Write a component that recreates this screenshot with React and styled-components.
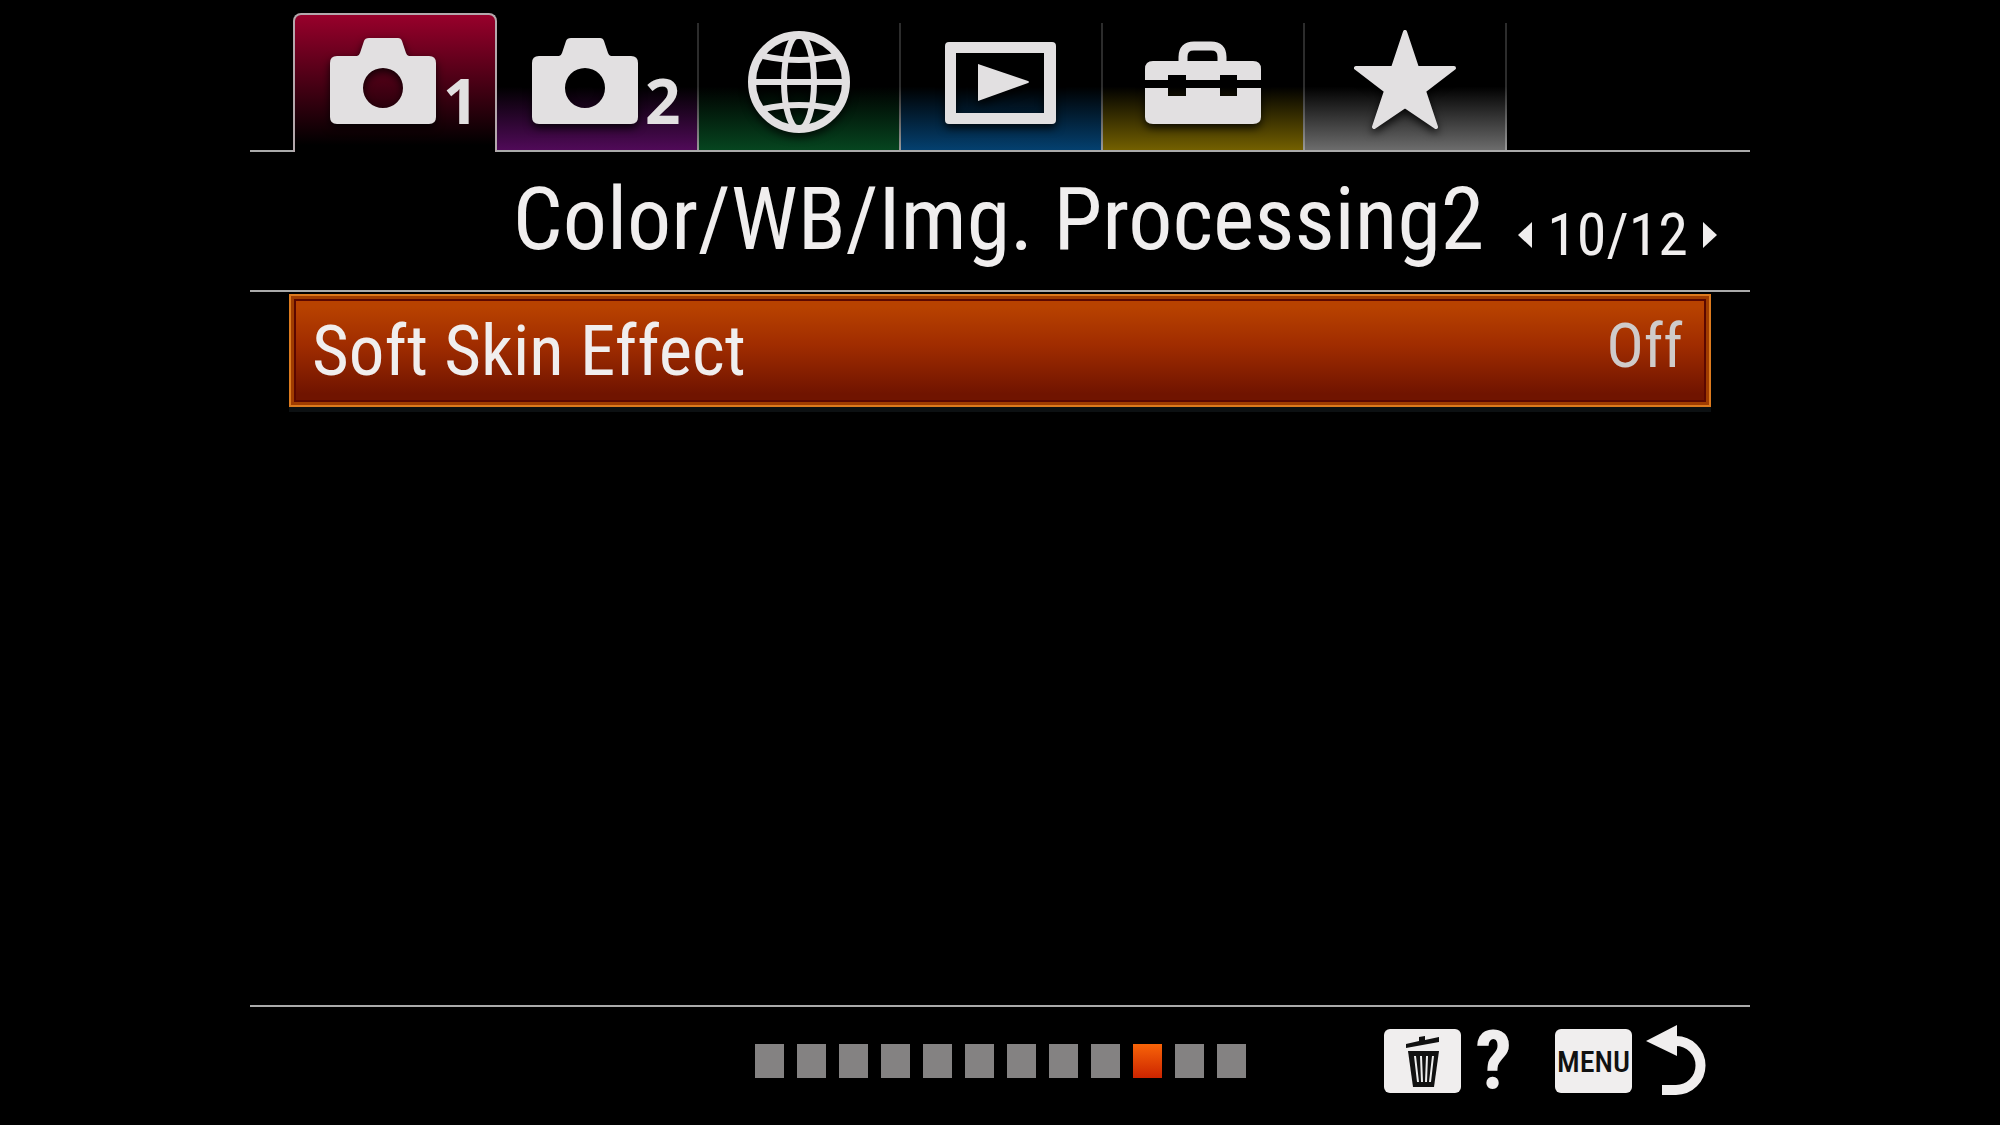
import styled, { createGlobalStyle } from "styled-components";
import { useState } from "react";

const TABS = [
  { id: "camera1", label: "Camera 1", color: "#98002b", number: "1" },
  { id: "camera2", label: "Camera 2", color: "#500a58", number: "2" },
  { id: "network", label: "Network", color: "#06451f" },
  { id: "playback", label: "Playback", color: "#04406f" },
  { id: "setup", label: "Setup", color: "#736000" },
  { id: "mymenu", label: "My Menu", color: "#6c6c6c" },
];

const PAGE_COUNT = 12;

const App = () => {
  const [tab, setTab] = useState("camera1");
  const [page, setPage] = useState(10);

  return (
    <>
      <GlobalStyle />
      <Screen>
        <TabBar role="tablist">
          {TABS.map(({ id, label, color, number }) => (
            <Tab
              key={id}
              role="tab"
              aria-label={label}
              aria-selected={tab === id}
              $active={tab === id}
              $color={color}
              $numbered={Boolean(number)}
              onClick={() => setTab(id)}
            >
              <TabIcon id={id} />
              {number && <TabNumber>{number}</TabNumber>}
            </Tab>
          ))}
        </TabBar>

        <Header>
          <Title>Color/WB/Img. Processing2</Title>
          <Pager>
            <PagerButton
              aria-label="Previous page"
              onClick={() => setPage(Math.max(1, page - 1))}
            >
              <svg width="14" height="28" viewBox="0 0 14 28">
                <path d="M14 1V27L0 14Z" fill="#f0eeee" />
              </svg>
            </PagerButton>
            <PagerText>
              {page}/{PAGE_COUNT}
            </PagerText>
            <PagerButton
              aria-label="Next page"
              onClick={() => setPage(Math.min(PAGE_COUNT, page + 1))}
            >
              <svg width="14" height="28" viewBox="0 0 14 28">
                <path d="M0 1V27L14 14Z" fill="#f0eeee" />
              </svg>
            </PagerButton>
          </Pager>
        </Header>

        <List>
          <Item>
            <ItemName>Soft Skin Effect</ItemName>
            <ItemValue>Off</ItemValue>
          </Item>
        </List>

        <Footer>
          <Dots>
            {Array.from({ length: PAGE_COUNT }, (_, i) => (
              <Dot key={i} $active={i + 1 === page} />
            ))}
          </Dots>
          <Hints>
            <Hint aria-label="Help">
              <Key>
                <TrashIcon />
              </Key>
              <HelpMark>?</HelpMark>
            </Hint>
            <Hint aria-label="Back">
              <Key>MENU</Key>
              <BackIcon />
            </Hint>
          </Hints>
        </Footer>
      </Screen>
    </>
  );
};

export default App;

const TabIcon = ({ id }) => {
  switch (id) {
    case "camera1":
    case "camera2":
      return (
        <Icon width="106" height="104" viewBox="0 0 106 104">
          <path
            fillRule="evenodd"
            d="M7 27H27Q29 27 30 24L34 12Q35 9 39 9H68Q71 9 72 12L76 24Q77 27 79 27H99Q106 27 106 34V88Q106 95 99 95H7Q0 95 0 88V34Q0 27 7 27ZM53 39A20 20 0 1 0 53 79A20 20 0 1 0 53 39Z"
          />
        </Icon>
      );
    case "network":
      return (
        <Icon width="104" height="104" viewBox="0 0 104 104">
          <g fill="none" stroke="#e2e0e1" strokeWidth="6">
            <circle cx="51" cy="53" r="47" strokeWidth="8" />
            <ellipse cx="51" cy="53" rx="15" ry="47" />
            <path d="M5 53H97" />
            <path d="M15 27Q51 35 87 27" />
            <path d="M15 80Q51 72 87 80" />
          </g>
        </Icon>
      );
    case "playback":
      return (
        <Icon width="114" height="104" viewBox="0 0 114 104">
          <path
            fillRule="evenodd"
            d="M4 13H107Q111 13 111 17V91Q111 95 107 95H4Q0 95 0 91V17Q0 13 4 13ZM11 24V84H99V24Z"
          />
          <path d="M33 35L83 52Q85 53 83 54L33 72Z" />
        </Icon>
      );
    case "setup":
      return (
        <Icon width="118" height="104" viewBox="0 0 118 104">
          <path
            d="M38 33V28Q38 17 49 17H66Q77 17 77 28V33"
            fill="none"
            stroke="#e2e0e1"
            strokeWidth="9"
          />
          <path d="M8 32H108Q116 32 116 40V51H92V46H75V51H41V46H23V51H0V40Q0 32 8 32Z" />
          <path d="M0 59H23V67H41V59H75V67H92V59H116V88Q116 95 108 95H8Q0 95 0 88Z" />
        </Icon>
      );
    default:
      return (
        <Icon width="106" height="104" viewBox="0 0 106 104">
          <path
            stroke="#e2e0e1"
            strokeWidth="4"
            strokeLinejoin="round"
            d="M52 3L64 39H101L71 62L83 98L52 77L21 98L33 62L3 39H40Z"
          />
        </Icon>
      );
  }
};

const TrashIcon = () => (
  <svg width="34" height="54" viewBox="0 0 34 54">
    <path d="M0 10L13 7V3L19 2V6L33 3V8L0 14Z" fill="#111" />
    <path d="M2 17H33L28 53H7Z" fill="#111" />
    <path
      d="M9 22L12 48M15 22L16 48M21 22L20 48M27 22L24 48"
      stroke="#eee"
      strokeWidth="2"
    />
  </svg>
);

const BackIcon = () => (
  <svg width="60" height="72" viewBox="0 0 60 72">
    <path d="M0 16L31 0V31Z" fill="#f0eeee" />
    <path
      d="M28 16H30A24 24 0 0 1 30 65H16"
      fill="none"
      stroke="#f0eeee"
      strokeWidth="10"
    />
  </svg>
);

const GlobalStyle = createGlobalStyle`
  body {
    margin: 0;
    background: #000;
    color: #f0eeee;
    font-family: "Roboto Condensed", Roboto, sans-serif;
  }

  button {
    padding: 0;
    border: 0;
    background: none;
    color: inherit;
    font: inherit;
    cursor: pointer;
  }
`;

const Screen = styled.div`
  display: flex;
  flex-direction: column;
  width: 75%;
  min-height: 100vh;
  margin: 0 auto;
`;

const TabBar = styled.div`
  display: flex;
  align-items: flex-end;
  padding-top: 13px;

  &::before,
  &::after {
    content: "";
    width: 43px;
    border-bottom: 2px solid #aaa;
  }

  &::after {
    flex: 1;
  }
`;

const Tab = styled.button`
  display: flex;
  align-items: flex-end;
  justify-content: ${({ $numbered }) => ($numbered ? "flex-start" : "center")};
  gap: 7px;
  box-sizing: border-box;
  flex: 0 0 ${({ $active }) => ($active ? 204 : 202)}px;
  height: ${({ $active }) => ($active ? 139 : 129)}px;

  && {
    padding-left: ${({ $numbered }) => ($numbered ? 35 : 0)}px;
    padding-bottom: ${({ $active }) => ($active ? 19 : 17)}px;

    ${({ $active, $color }) =>
      $active
        ? `
      border: 2px solid #b4a8ac;
      border-bottom: 0;
      border-radius: 8px 8px 0 0;
      background: linear-gradient(${$color}, #000 95%);
    `
        : `
      border-bottom: 2px solid #aaa;
      background:
        linear-gradient(#2c2c2c 50%, #999) right / 2px 100% no-repeat,
        linear-gradient(#000 50%, ${$color});
    `}
  }
`;

const Icon = styled.svg`
  flex: none;
  fill: #e2e0e1;
  filter: drop-shadow(0 4px 4px rgba(0, 0, 0, 0.8));
`;

const TabNumber = styled.span`
  font-family: "Open Sans", sans-serif;
  font-size: 62px;
  font-weight: 700;
  line-height: 66px;
  color: #e2e0e1;
`;

const Header = styled.header`
  display: flex;
  justify-content: flex-end;
  gap: 34px;
  padding: 18px 33px 22px;
  border-bottom: 2px solid #aaa;
`;

const Title = styled.h1`
  margin: 0;
  font-size: 88px;
  font-weight: 400;
  line-height: 98px;
  white-space: nowrap;
`;

const Pager = styled.div`
  display: flex;
  align-items: center;
  gap: 15px;
  height: 66px;
  padding-top: 32px;
`;

const PagerButton = styled.button`
  display: flex;
`;

const PagerText = styled.span`
  font-size: 60px;
  line-height: 66px;
`;

const List = styled.main`
  flex: 1;
  padding: 2px 39px;
`;

const Item = styled.button`
  && {
    display: flex;
    justify-content: space-between;
    box-sizing: border-box;
    width: 100%;
    height: 113px;
    padding: 0 26px 0 21px;
    border: 2px solid #dc7a1e;
    background: linear-gradient(#b84200 10%, #a02c00 45%, #701400 90%);
    box-shadow:
      inset 0 0 0 3px #a03c00,
      inset 0 0 0 5px #5c0800,
      0 5px 0 #0c1012;
  }
`;

const ItemName = styled.span`
  font-size: 71px;
  line-height: 110px;
`;

const ItemValue = styled.span`
  font-size: 62px;
  line-height: 100px;
  color: #cfcbca;
`;

const Footer = styled.footer`
  display: grid;
  grid-template-columns: 1fr auto 1fr;
  align-items: center;
  box-sizing: border-box;
  height: 120px;
  padding-bottom: 10px;
  border-top: 2px solid #aaa;
`;

const Dots = styled.ol`
  grid-column: 2;
  display: flex;
  gap: 13px;
  margin: 0;
  padding: 0;
  list-style: none;
`;

const Dot = styled.li`
  width: 29px;
  height: 34px;
  background: ${({ $active }) =>
    $active ? "linear-gradient(#f86408, #cc2400)" : "#848282"};
`;

const Hints = styled.div`
  display: flex;
  justify-content: flex-end;
  gap: 43px;
  padding-right: 44px;
`;

const Hint = styled.button`
  display: flex;
  align-items: center;
  gap: 14px;
`;

const Key = styled.span`
  display: flex;
  align-items: center;
  justify-content: center;
  width: 77px;
  height: 64px;
  border-radius: 6px;
  background: #f0eeee;
  color: #111;
  font-size: 30px;
  font-weight: 500;
`;

const HelpMark = styled.span`
  font-size: 82px;
  font-weight: 700;
  line-height: 64px;
`;
